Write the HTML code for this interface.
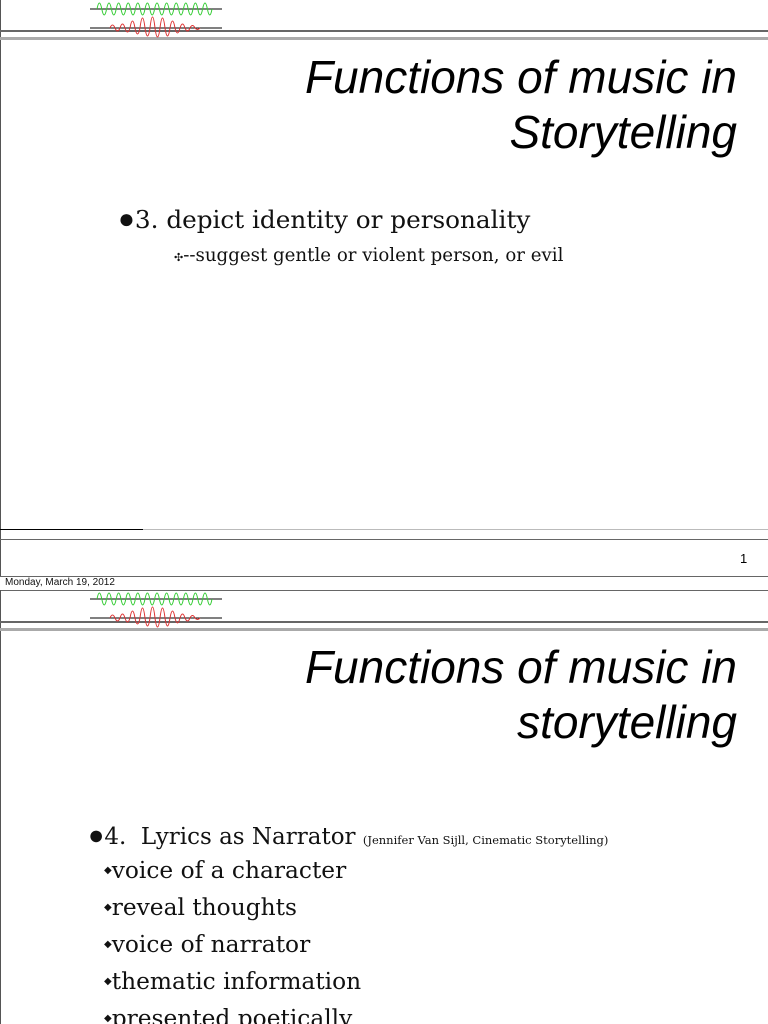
<!DOCTYPE html>
<html><head><meta charset="utf-8"><style>
html,body{margin:0;padding:0;width:768px;height:1024px;overflow:hidden;background:#fff;position:relative}
.a{position:absolute;white-space:nowrap}
.t{font-family:"Liberation Sans",sans-serif;font-style:italic;font-size:46px;right:31px;color:#000;line-height:1}
.s{font-family:"DejaVu Serif",serif;color:#111;line-height:1}
.h{position:absolute;left:0}
</style></head><body>
<div class="h" style="top:0;width:1px;height:576px;background:#555"></div>
<div class="h" style="top:30px;width:768px;height:2px;background:#666"></div>
<div class="h" style="top:37px;width:768px;height:3px;background:#aaa"></div>
<div class="h" style="top:529px;width:768px;height:1px;background:#bbb"></div>
<div class="h" style="top:529px;width:143px;height:1px;background:#000"></div>
<div class="h" style="top:539px;width:768px;height:1px;background:#666"></div>
<div class="h" style="top:576px;width:768px;height:1px;background:#666"></div>
<div class="a" style="left:5px;top:577px;font:10px 'Liberation Sans',sans-serif;color:#111">Monday, March 19, 2012</div>
<div class="h" style="top:590px;width:768px;height:1px;background:#666"></div>
<div class="h" style="top:590px;width:1px;height:434px;background:#555"></div>
<div class="h" style="top:621px;width:768px;height:2px;background:#666"></div>
<div class="h" style="top:628px;width:768px;height:3px;background:#aaa"></div>

<svg class="a" style="left:0;top:0" width="768" height="1024">
<defs>
<g id="w">
<line x1="90" y1="9" x2="222" y2="9" stroke="#000" stroke-width="1"/>
<path d="M97 9 Q99.4 -3 101.8 9 T106.6 9 T111.4 9 T116.2 9 T121 9 T125.8 9 T130.6 9 T135.4 9 T140.2 9 T145 9 T149.8 9 T154.6 9 T159.4 9 T164.2 9 T169 9 T173.8 9 T178.6 9 T183.4 9 T188.2 9 T193 9 T197.8 9 T202.6 9 T207.4 9 T212 9" fill="none" stroke="#3c3" stroke-width="1"/>
<line x1="90" y1="28" x2="222" y2="28" stroke="#000" stroke-width="1"/>
<path d="M110 28 Q112.5 22 115 28 Q117.5 34 120 28 Q122.5 20 125 28 Q127.5 36 130 28 Q132.5 14 135 28 Q137.5 40 140 28 Q142.5 8 145 28 Q147.5 44 150 28 Q152.5 6 155 28 Q157.5 46 160 28 Q162.5 8 165 28 Q167.5 44 170 28 Q172.5 14 175 28 Q177.5 38 180 28 Q182.5 20 185 28 Q187.5 34 190 28 Q192.5 23 195 28 Q197.5 31 200 28" fill="none" stroke="#d33" stroke-width="1"/>
</g>
</defs>
<use href="#w"/>
<use href="#w" y="590"/>
</svg>

<div class="a t" style="top:54px">Functions of music in</div>
<div class="a t" style="top:109px">Storytelling</div>
<div class="a s" style="left:118px;top:206px;font-size:24.7px"><span style="font-family:'Liberation Serif';font-size:28px">●</span>3. depict identity or personality</div>
<div class="a s" style="left:174px;top:247px;font-size:18.2px"><span style="font-size:11px">✣</span>--suggest gentle or violent person, or evil</div>
<div class="a" style="left:740px;top:551px;font:13px 'Liberation Sans',sans-serif">1</div>

<div class="a t" style="top:644px">Functions of music in</div>
<div class="a t" style="top:699px">storytelling</div>
<div class="a s" style="left:88px;top:822px;font-size:23px"><span style="font-family:'Liberation Serif';font-size:27px">●</span>4.&nbsp; Lyrics as Narrator <span style="font-size:11.5px">(Jennifer Van Sijll, Cinematic Storytelling)</span></div>
<div class="a s" style="left:104px;top:859px;font-size:23.3px"><span style="font-size:10px;vertical-align:5px">◆</span>voice of a character</div>
<div class="a s" style="left:104px;top:896px;font-size:23.3px"><span style="font-size:10px;vertical-align:5px">◆</span>reveal thoughts</div>
<div class="a s" style="left:104px;top:933px;font-size:23.3px"><span style="font-size:10px;vertical-align:5px">◆</span>voice of narrator</div>
<div class="a s" style="left:104px;top:970px;font-size:23.3px"><span style="font-size:10px;vertical-align:5px">◆</span>thematic information</div>
<div class="a s" style="left:104px;top:1007px;font-size:23.3px"><span style="font-size:10px;vertical-align:5px">◆</span>presented poetically</div>
</body></html>
